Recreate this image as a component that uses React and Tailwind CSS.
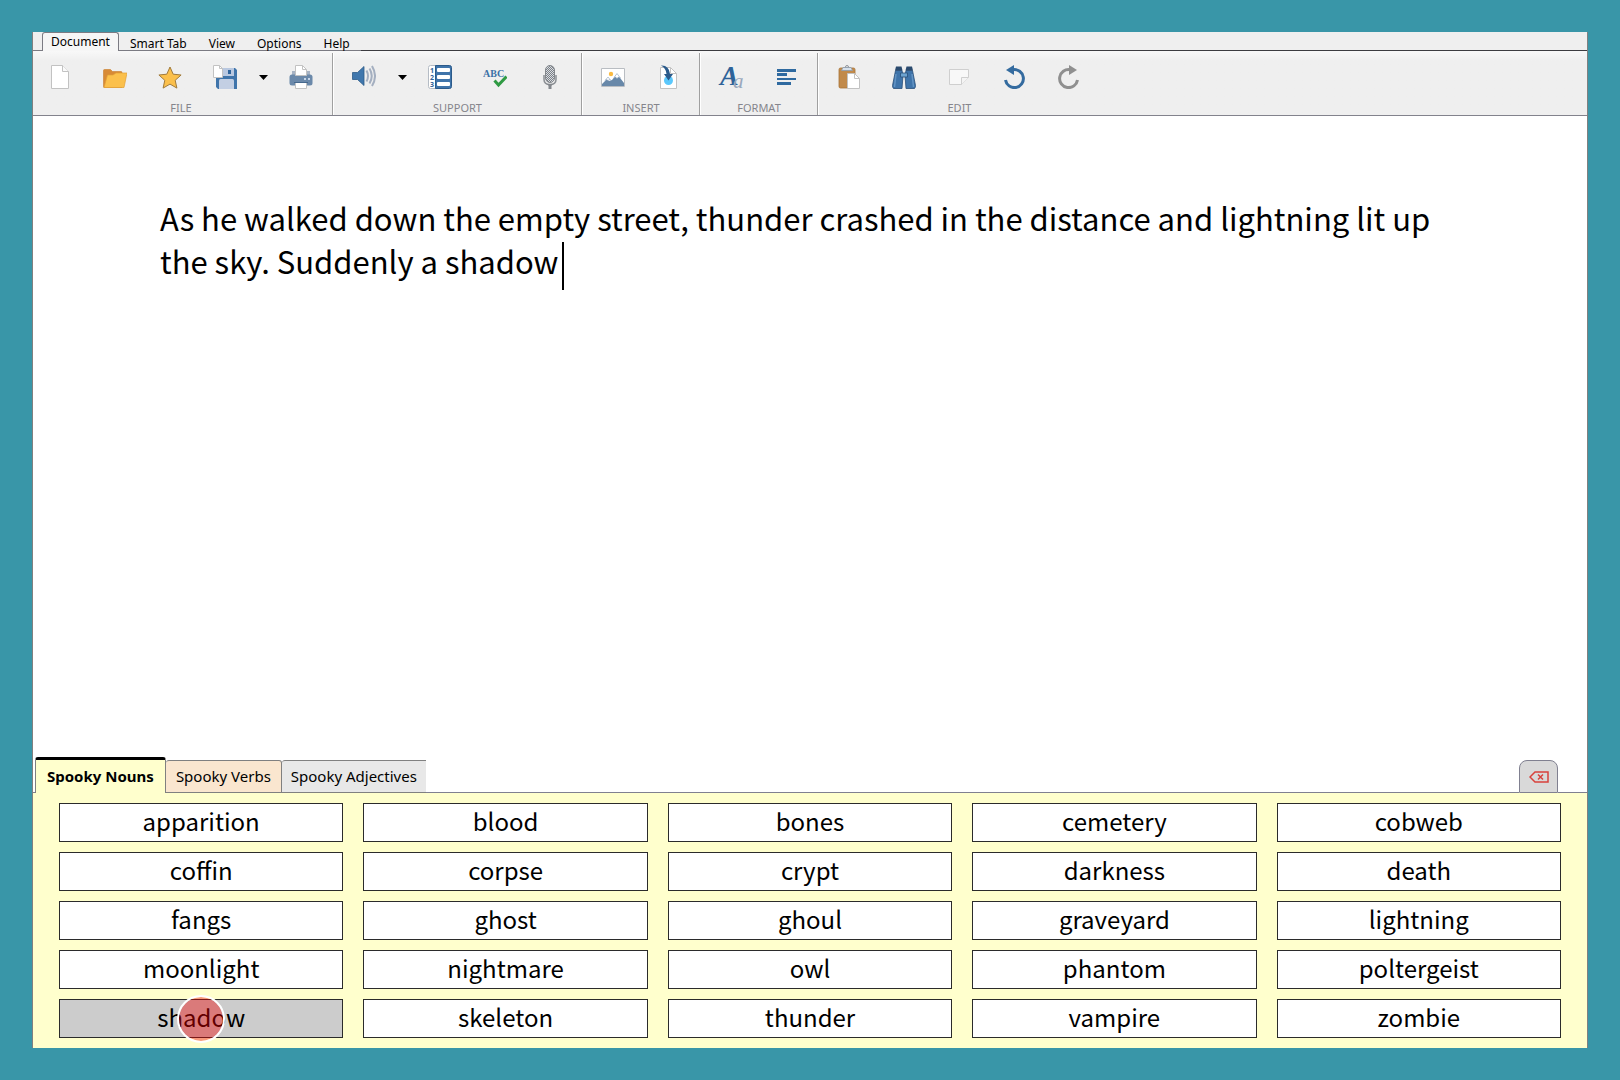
import { useState } from "react";

const menus = ["Document", "Smart Tab", "View", "Options", "Help"];

const wordLists = [
  {
    name: "Spooky Nouns",
    words: [
      "apparition", "blood", "bones", "cemetery", "cobweb",
      "coffin", "corpse", "crypt", "darkness", "death",
      "fangs", "ghost", "ghoul", "graveyard", "lightning",
      "moonlight", "nightmare", "owl", "phantom", "poltergeist",
      "shadow", "skeleton", "thunder", "vampire", "zombie",
    ],
  },
  { name: "Spooky Verbs", words: [] },
  { name: "Spooky Adjectives", words: [] },
];

const initialText =
  "As he walked down the empty street, thunder crashed in the distance and lightning lit up the sky. Suddenly a shadow ";

function Icon({ children }) {
  return (
    <svg viewBox="0 0 24 24" className="w-6 h-6" aria-hidden="true">
      {children}
    </svg>
  );
}

const NewIcon = () => (
  <Icon>
    <path d="M3.500.5h11l6 6v17h-17z" fill="#fff" stroke="#c2c2c2" />
    <path d="M14.500.5v6h6" fill="#fafafa" stroke="#c2c2c2" />
  </Icon>
);

const OpenIcon = () => (
  <Icon>
    <path d="M.5 5.500q0-1 1-1h6l2 2h8.500q1 0 1 1v15h-18q-.5 0-.5-1z" fill="#d88a35" stroke="#c97d2c" strokeWidth=".6" />
    <path d="M4.500 10h5.500l3-2h11l-3 14.500h-20z" fill="#fbc04c" stroke="#e3a135" strokeWidth=".7" />
  </Icon>
);

const StarIcon = () => (
  <Icon>
    <path
      d="M12 2l3.200 7.200 7.900.8-5.900 5.300 1.700 7.800-6.900-4-6.900 4 1.700-7.800L.9 10l7.900-.8z"
      fill="#fbc04c"
      stroke="#a07a3c"
    />
  </Icon>
);

const SaveIcon = () => (
  <Icon>
    <path d="M3 3h19l2 2v19H5l-2-2z" fill="#3f74aa" />
    <path d="M10 3h11v8H10z" fill="#b9c8e0" />
    <path d="M15 5h3v4h-3z" fill="#2f649c" />
    <path d="M6 24v-8.500q0-1.500 1.500-1.500h12q1.500 0 1.500 1.500V24z" fill="#c3cfe3" />
    <path d="M.5.5h6l3 3v9h-9z" fill="#fff" stroke="#c2c2c2" />
    <path d="M6.500.5v3h3" fill="none" stroke="#c2c2c2" />
  </Icon>
);

const PrintIcon = () => (
  <Icon>
    <path d="M3 6h18v5H3z" fill="#a7b3c4" />
    <rect x=".5" y="9.500" width="23" height="11" rx="2.500" fill="#6b89aa" />
    <path d="M6.500.5h7l4 4v6h-11z" fill="#fff" stroke="#c2c2c2" />
    <path d="M13.500.5v4h4" fill="none" stroke="#c2c2c2" />
    <path d="M6.500 17.500h11v6h-11z" fill="#fff" stroke="#c2c2c2" />
    <path d="M5 17.500h14" stroke="#46688d" />
    <path d="M15 13h2v2h-2zM19 13h2v2h-2z" fill="#c6d5e8" />
  </Icon>
);

const SpeechIcon = () => (
  <Icon>
    <path d="M.5 7.500h5l6.500-6v19l-6.500-6h-5z" fill="#4077ad" stroke="#2c5a88" strokeWidth=".8" />
    <g fill="none" stroke="#a4afc0" strokeWidth="2">
      <path d="M14.500 5.500q3 5.500 0 11" />
      <path d="M17.500 3.500q4.500 7.500 0 15" />
      <path d="M20 1q6 10 0 20" />
    </g>
  </Icon>
);

const PredictIcon = () => (
  <Icon>
    <rect x=".5" y=".5" width="12" height="23" rx="2" fill="#fff" stroke="#b5bcc5" />
    <path d="M7.500.5h14q2 0 2 2v19q0 2-2 2h-14z" fill="#3f74aa" stroke="#2b5a8a" />
    <g fill="#fff">
      <rect x="9" y="3" width="13" height="4" rx="1" />
      <rect x="9" y="10" width="13" height="4" rx="1" />
      <rect x="9" y="17" width="13" height="4" rx="1" />
    </g>
    <g className="font-['Noto_Sans',sans-serif] font-bold" fontSize="7" fill="#2f6297">
      <text x="2" y="7.500">1</text>
      <text x="2" y="14.500">2</text>
      <text x="2" y="21.500">3</text>
    </g>
  </Icon>
);

const SpellIcon = () => (
  <Icon>
    <text x="0" y="11.500" className="font-['Liberation_Serif',serif] font-bold" fontSize="10" fill="#3c71a6">
      ABC
    </text>
    <path d="M11.500 15.500l4 4.500 8-8.500" fill="none" stroke="#2f9a43" strokeWidth="3" />
  </Icon>
);

const MicIcon = () => (
  <Icon>
    <defs>
      <pattern id="mesh" width="2" height="2" patternUnits="userSpaceOnUse">
        <path d="M0 0h1v1H0zM1 1h1v1H1z" fill="#7c8086" />
      </pattern>
    </defs>
    <rect x="7.500" y=".5" width="9" height="17" rx="4.500" fill="#d9dde2" />
    <rect x="7.500" y=".5" width="9" height="17" rx="4.500" fill="url(#mesh)" stroke="#84888d" />
    <path d="M6 10v4.500q0 5 6 5t6-5V10" fill="none" stroke="#8c9095" strokeWidth="1.500" />
    <path d="M9.500 19h5l-1 2v3h-3v-3z" fill="#84888d" />
  </Icon>
);

const PictureIcon = () => (
  <Icon>
    <path d="M.5 3.500h23v18H.5z" fill="#fff" stroke="#b9bdc2" />
    <circle cx="10" cy="9" r="2.200" fill="#fbbb42" />
    <path d="M1 19l5-5 2 2 3-1 5-6 7 9v3H1z" fill="#6888a9" />
    <path d="M4 15.500l3-3.500 2.500 3-1.500-.5-1 1-1-1zM13 12.500l3-4 3.500 4.500-2-1-1.500 1.500-1.500-1.500z" fill="#fff" stroke="#8fa5bd" strokeWidth=".6" />
  </Icon>
);

const InsertFileIcon = () => (
  <Icon>
    <path d="M4.500 2.500h10l6 6v15h-16z" fill="#fff" stroke="#c2c2c2" />
    <path d="M14.500 2.500v6h6" fill="none" stroke="#c2c2c2" />
    <circle cx="12.500" cy="15.500" r="4.500" fill="#5bc8fc" />
    <path d="M5 .5q8-.5 9 8.500h3l-4.500 6.500L8 9h2.500Q10 3 5 .5z" fill="#2b5b8b" />
  </Icon>
);

// Taller than the other icons so the large letter keeps its whole line box
const FontIcon = () => (
  <svg viewBox="-5 -8 34 40" className="w-[34px] h-10" aria-hidden="true">
    <g className="font-['Liberation_Serif',serif] italic">
      <text x="1" y="20" fontSize="28" className="font-bold" fill="#2e6399">A</text>
      <text x="14" y="23" fontSize="21" fill="#9aa8bd">a</text>
    </g>
  </svg>
);

const AlignIcon = () => (
  <Icon>
    <path d="M3 4h19v3H3zM3 8h10v3H3zM3 13h19v2H3zM3 17h14v3H3z" fill="#2f6aa0" />
  </Icon>
);

const PasteIcon = () => (
  <Icon>
    <rect x="2" y="3" width="16" height="20" rx="1.500" fill="#c18a4b" stroke="#a87439" strokeWidth=".8" />
    <circle cx="10" cy="2" r="1.500" fill="none" stroke="#8d9198" />
    <path d="M6 2.500h8l1.500 3h-11z" fill="#d6e0ea" stroke="#8d9aab" strokeWidth=".8" />
    <path d="M10.500 8.500h7l5 5v10h-12z" fill="#fff" stroke="#c2c2c2" />
    <path d="M17.500 8.500v5h5" fill="none" stroke="#c2c2c2" />
  </Icon>
);

const FindIcon = () => (
  <Icon>
    <g fill="#3f74aa" stroke="#2a4f78" strokeWidth=".8">
      <path d="M3.500 5.500h6.500l1 5-1 13H1.500q-1-1-1-3z" />
      <path d="M20.500 5.500H14l-1 5 1 13h8.500q1-1 1-3z" />
      <path d="M8.500 8h7v4h-7z" fill="#6da3cf" />
    </g>
    <path d="M4 1.500h5.500l1 4H3zM20 1.500h-5.500l-1 4H21z" fill="#2a4a6e" />
    <path d="M4 9l-1.500 13M20 9l1.500 13" stroke="#6394c4" strokeWidth="1.500" />
  </Icon>
);

const NoteIcon = () => (
  <Icon>
    <path d="M2.500 4.500h19v8l-7 7h-12z" fill="#f8f8f8" stroke="#cfcfcf" />
    <path d="M14.500 19.500v-7h7" fill="#f4f4f4" stroke="#cfcfcf" />
  </Icon>
);

const UndoIcon = () => (
  <Icon>
    <path d="M11 4.700a9 9 0 1 1-7.500 10.300" fill="none" stroke="#346b9f" strokeWidth="3" />
    <path d="M4 5l8-5v10z" fill="#346b9f" />
  </Icon>
);

const RedoIcon = () => (
  <Icon>
    <path d="M13 4.700a9 9 0 1 0 7.500 10.300" fill="none" stroke="#8f8f8f" strokeWidth="3" />
    <path d="M20 5l-8-5v10z" fill="#8f8f8f" />
  </Icon>
);

const toolGroups = [
  {
    label: "FILE",
    tools: [
      { name: "New", icon: NewIcon },
      { name: "Open", icon: OpenIcon },
      { name: "Favourites", icon: StarIcon },
      { name: "Save", icon: SaveIcon, menu: true },
      { name: "Print", icon: PrintIcon },
    ],
  },
  {
    label: "SUPPORT",
    tools: [
      { name: "Speech", icon: SpeechIcon, menu: true },
      { name: "Prediction", icon: PredictIcon },
      { name: "Spell check", icon: SpellIcon },
      { name: "Dictate", icon: MicIcon },
    ],
  },
  {
    label: "INSERT",
    tools: [
      { name: "Picture", icon: PictureIcon },
      { name: "File", icon: InsertFileIcon },
    ],
  },
  {
    label: "FORMAT",
    tools: [
      { name: "Font", icon: FontIcon },
      { name: "Paragraph", icon: AlignIcon },
    ],
  },
  {
    label: "EDIT",
    tools: [
      { name: "Paste", icon: PasteIcon },
      { name: "Find", icon: FindIcon },
      { name: "Note", icon: NoteIcon },
      { name: "Undo", icon: UndoIcon },
      { name: "Redo", icon: RedoIcon },
    ],
  },
];

function MenuBar({ active, onSelect }) {
  return (
    <nav className="flex h-[19px] text-xs leading-4 bg-[#efefef]">
      <div className="w-[9px] border-b border-[#7b7b83]" />
      {menus.map((menu) => (
        <button
          key={menu}
          onClick={() => onSelect(menu)}
          className={
            menu === active
              ? "px-2 bg-[#f6f6f6] border border-b-0 border-[#7b7b83] rounded-t-[3px]"
              : "px-[11px] pt-1 border-b border-[#7b7b83]"
          }
        >
          {menu}
        </button>
      ))}
      <div className="flex-1 border-b border-[#3c3c40]" />
    </nav>
  );
}

function ToolGroup({ label, tools }) {
  return (
    <div className="flex flex-col px-[3px] first:pl-0 border-l border-l-white first:border-l-0 border-r border-r-[#a0a0a0] last:border-r-0">
      <div className="flex h-12 items-center">
        {tools.map(({ name, icon: ToolIcon, menu }) => (
          <div key={name} className="flex">
            <button aria-label={name} className="flex w-[55px] pr-px items-center justify-center">
              <ToolIcon />
            </button>
            {menu && (
              <button aria-label={`${name} options`} className="flex w-[21px] items-center justify-center">
                <svg viewBox="0 0 9 5" className="w-[9px] h-[5px]" aria-hidden="true">
                  <path d="M0 0h9L4.500 5z" />
                </svg>
              </button>
            )}
          </div>
        ))}
      </div>
      <div className="text-center text-[11px] leading-[14px] text-[#85858c]">{label}</div>
    </div>
  );
}

function Toolbar() {
  return (
    <div className="flex h-[65px] pt-[2px] bg-linear-to-b from-[#f8f8f8] to-[#efefef] to-15% border-b border-[#82828c]">
      {toolGroups.map((group) => (
        <ToolGroup key={group.label} {...group} />
      ))}
    </div>
  );
}

function Editor({ text, onChange }) {
  return (
    <main className="relative flex-1 bg-white">
      <textarea
        aria-label="Document text"
        value={text}
        onChange={(e) => onChange(e.target.value)}
        spellCheck={false}
        className="block w-full h-full pt-20 pl-[127px] pr-[120px] resize-none outline-none text-[31px] leading-[43px] font-['Noto_Sans_CJK_SC',sans-serif]"
      />
      <div className="absolute left-[529px] top-[126px] w-[2px] h-12 bg-black" />
    </main>
  );
}

const tabStyles = [
  "h-9 px-[11px] bg-[#ffffcd] border-t-[3px] border-x border-t-black border-x-[#808080] rounded-t-[3px] font-bold",
  "h-[33px] px-[10px] bg-[#fae6cf] border-t border-r border-b border-[#808080] rounded-t-[3px]",
  "h-[33px] px-[9px] bg-[#e8e8e8] border-t border-b border-[#808080] rounded-tl-[3px]",
];

function WordTabs({ active, onSelect, onBackspace }) {
  return (
    <div className="flex items-end bg-white text-[15px]">
      <div className="w-[2px] h-9 border-b border-[#808090]" />
      {wordLists.map(({ name }, index) => (
        <button
          key={name}
          aria-pressed={index === active}
          onClick={() => onSelect(index)}
          className={tabStyles[index]}
        >
          {name}
        </button>
      ))}
      <div className="flex-1 border-b border-[#808090]" />
      <button
        aria-label="Delete word"
        onClick={onBackspace}
        className="flex w-[39px] h-[33px] items-center justify-center bg-[#d9d9d9] border border-[#808090] rounded-t-lg"
      >
        <svg viewBox="0 0 20 12" className="w-5 h-3" fill="none" stroke="#d8423c" aria-hidden="true">
          <path d="M6 1h13v10H6L1 6z" strokeWidth="1.500" />
          <path d="M9 3.500l5 5M14 3.500l-5 5" strokeWidth="1.500" />
        </svg>
      </button>
      <div className="w-[29px] border-b border-[#808090]" />
    </div>
  );
}

function WordGrid({ words, pressed, onPick }) {
  return (
    <div className="grid grid-cols-5 gap-x-5 gap-y-[10px] px-[26px] py-[10px] bg-[#ffffcd] font-['Noto_Sans_CJK_SC',sans-serif] text-2xl">
      {words.map((word) => (
        <button
          key={word}
          onClick={() => onPick(word)}
          className={`relative h-[39px] pb-1 border border-[#2b2b2b] ${word === pressed ? "bg-[#cccccc]" : "bg-white"}`}
        >
          {word}
          {word === pressed && (
            <span className="absolute inset-0 flex items-center justify-center">
              <span className="w-12 h-12 shrink-0 rounded-full border-2 border-white bg-[#f00000]/40 bg-clip-padding" />
            </span>
          )}
        </button>
      ))}
    </div>
  );
}

export default function App() {
  const [menu, setMenu] = useState("Document");
  const [text, setText] = useState(initialText);
  const [list, setList] = useState(0);
  const [pressed, setPressed] = useState("shadow");

  const pickWord = (word) => {
    setPressed(word);
    setText(text + word + " ");
  };

  return (
    <div className="min-h-screen flex p-8 bg-[#3996a8] text-black font-['Noto_Sans',sans-serif]">
      <div className="flex flex-1 flex-col border-x border-[#808080]">
        <MenuBar active={menu} onSelect={setMenu} />
        <Toolbar />
        <Editor text={text} onChange={setText} />
        <WordTabs
          active={list}
          onSelect={setList}
          onBackspace={() => setText(text.replace(/\S+\s*$/, ""))}
        />
        <WordGrid words={wordLists[list].words} pressed={pressed} onPick={pickWord} />
      </div>
    </div>
  );
}
